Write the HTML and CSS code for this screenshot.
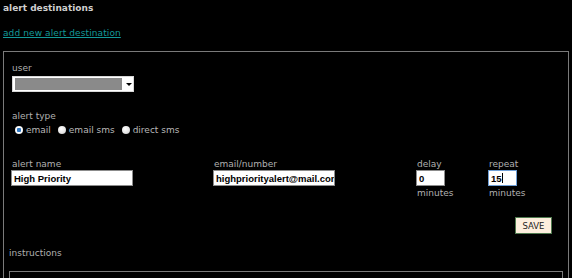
FILE: index.html
```html
<!DOCTYPE html>
<html lang="en">
<head>
  <meta charset="UTF-8" />
  <title>alert destinations</title>
  <link rel="stylesheet" href="styles.css">
</head>
<body>
  <div class="page">
    <div class="title">alert destinations</div>
    <a class="add-link" href="#">add new alert destination</a>

    <div class="panel">
      <div class="form">
        <div class="label">user</div>
        <div class="select">
          <span class="select-value"></span>
          <span class="select-arrow"></span>
        </div>

        <div class="label type-label">alert type</div>
        <div class="radios">
          <span class="radio checked"></span><span class="radio-text">email</span>
          <span class="radio"></span><span class="radio-text">email sms</span>
          <span class="radio"></span><span class="radio-text">direct sms</span>
        </div>

        <div class="fields">
          <div class="field col-name">
            <div class="label">alert name</div>
            <input class="input wide" type="text" value="High Priority">
          </div>
          <div class="field col-email">
            <div class="label">email/number</div>
            <input class="input wide" type="text" value="highpriorityalert@mail.com">
          </div>
          <div class="field col-delay">
            <div class="label">delay</div>
            <input class="input short" type="text" value="0">
            <div class="label unit">minutes</div>
          </div>
          <div class="field col-repeat">
            <div class="label">repeat</div>
            <span class="caret-wrap">
              <input class="input short focused" type="text" value="15">
              <span class="caret"></span>
            </span>
            <div class="label unit">minutes</div>
          </div>
        </div>

        <div class="actions">
          <button class="save">SAVE</button>
        </div>
      </div>

      <div class="label instructions">instructions</div>
      <div class="instructions-box"></div>
    </div>
  </div>
</body>
</html>
```

FILE: styles.css
```css
* { box-sizing: border-box; }
html, body {
  margin: 0;
  padding: 0;
  background: #000;
  height: 278px;
  overflow: hidden;
}
body {
  font-family: "DejaVu Sans", Verdana, sans-serif;
  font-size: 9px;
  line-height: 11px;
  color: #b8b8b8;
}
.page {
  padding: 3px 3px 0 3px;
}
.title {
  font-weight: bold;
  color: #cfcfcf;
}
.add-link {
  display: inline-block;
  margin-top: 14px;
  color: #139a9a;
  text-decoration: underline;
  letter-spacing: 0.1px;
}
.panel {
  margin-top: 12px;
  border: 1px solid #7a7a7a;
  padding: 11px 5px 0 5px;
  height: 400px;
}
.form {
  padding-left: 3px;
}
.label {
  color: #b0b0b0;
}
.select {
  margin-top: 2px;
  width: 122px;
  height: 16px;
  background: #fff;
  border: 1px solid #d8d8d8;
  display: flex;
  align-items: center;
  padding: 1px 0 1px 2px;
}
.select-value {
  width: 107px;
  height: 12px;
  background: #8a8a8a;
}
.select-arrow {
  margin-left: 4px;
  width: 0;
  height: 0;
  border-left: 3px solid transparent;
  border-right: 3px solid transparent;
  border-top: 3px solid #000;
}
.type-label {
  margin-top: 19px;
}
.radios {
  margin-top: 2px;
  height: 12px;
  display: flex;
  align-items: center;
  padding-left: 3px;
}
.radio {
  width: 8px;
  height: 8px;
  border-radius: 50%;
  background: radial-gradient(circle at 40% 35%, #ffffff 0%, #e4e4e4 60%, #b0b0b0 100%);
  margin-right: 3px;
}
.radio.checked {
  background: radial-gradient(circle, #2f78c4 0 2px, #ffffff 2.5px, #e0e0e0 100%);
}
.radio-text {
  margin-right: 7px;
}
.fields {
  margin-top: 23px;
  display: flex;
}
.col-name { width: 202px; }
.col-email { width: 203px; }
.col-delay { width: 72px; }
.input {
  display: block;
  margin-left: -1px;
  height: 16px;
  padding: 0 0 0 2px;
  border: 1px solid #8c8c8c;
  background: #fff;
  color: #000;
  font-family: "Liberation Sans", Arial, sans-serif;
  font-size: 9.5px;
  font-weight: bold;
  outline: none;
}
.input.wide { width: 122px; }
.input.short { width: 29px; }
.input.focused {
  border-color: #6f9fd6;
}
.caret-wrap {
  position: relative;
  display: block;
}
.caret {
  position: absolute;
  left: 13px;
  top: 3px;
  width: 1px;
  height: 10px;
  background: #000;
}
.unit {
  margin-top: 2px;
}
.actions {
  margin-top: 18px;
  display: flex;
  justify-content: flex-end;
  padding-right: 11px;
}
.save {
  width: 37px;
  height: 17px;
  padding: 0;
  background: #fdeedd;
  border: 1px solid #4f7a4f;
  color: #222;
  font-family: "DejaVu Sans", Verdana, sans-serif;
  font-size: 8.5px;
}
.instructions {
  margin-top: 14px;
}
.instructions-box {
  margin-top: 12px;
  border: 1px solid #7a7a7a;
  height: 100px;
}
```
